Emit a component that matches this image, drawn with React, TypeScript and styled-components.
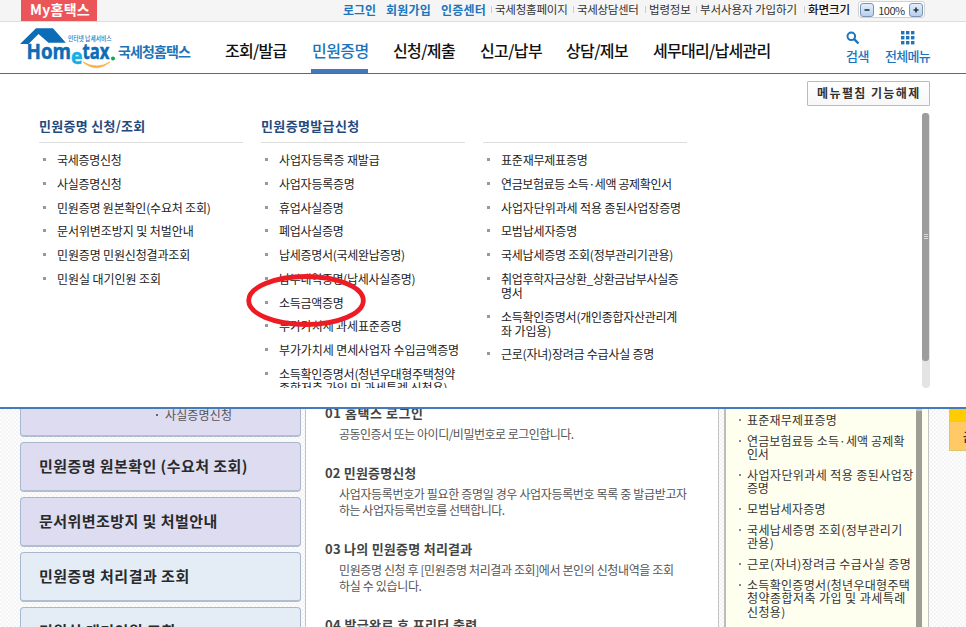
import React from "react";
import styled, { createGlobalStyle } from "styled-components";

const GlobalStyle = createGlobalStyle`
  * { box-sizing: border-box; }
  html, body { margin: 0; padding: 0; }
  body {
    width: 966px;
    height: 627px;
    overflow: hidden;
    background: #fff;
    font-family: "Noto Sans CJK KR", "Noto Sans", sans-serif;
    color: #333;
  }
  ul { list-style: none; margin: 0; padding: 0; }
`;

/* Average advance of a run, in em, used to derive the tracking of fixed-width labels. */
const advance = (text: string) =>
  Array.from(text).reduce((sum, ch) => {
    if (ch === " ") return sum + 0.224;
    if ("()[]".includes(ch)) return sum + 0.338;
    if (ch === "/") return sum + 0.392;
    if (ch === "·") return sum + 0.56;
    if (ch === ".") return sum + 0.278;
    if (ch === "%") return sum + 0.92;
    if (ch === "M") return sum + 0.84;
    if (/[0-9_y]/.test(ch)) return sum + 0.556;
    return sum + 0.92;
  }, 0);

const Run = styled.span<{ $size: number; $track: number; $weight?: number; $color?: string }>`
  display: block;
  white-space: nowrap;
  font-size: ${(p) => p.$size}px;
  letter-spacing: ${(p) => p.$track}px;
  font-weight: ${(p) => p.$weight ?? 400};
  color: ${(p) => p.$color ?? "inherit"};
`;

type LabelProps = { text: string; width: number; size?: number; weight?: number; color?: string };

const Label = ({ text, width, size = 12, weight, color }: LabelProps) => (
  <Run
    $size={size}
    $weight={weight}
    $color={color}
    $track={Math.round(((width + 0.6 - advance(text) * size) / text.length) * 100) / 100}
  >
    {text}
  </Run>
);

const Page = styled.div`
  position: relative;
  width: 966px;
  height: 627px;
  overflow: hidden;
  display: flex;
  flex-direction: column;
`;

/* ---------- utility bar ---------- */

const UtilityBar = styled.div`
  flex: none;
  height: 22px;
  display: flex;
  background: #f5f5f5;
  border-bottom: 1px solid #ddd;
  padding-left: 21px;
`;

const MyTab = styled.div`
  width: 76px;
  height: 21px;
  background: #ec5558;
  padding-left: 9px;
  line-height: 19px;
`;

const UtilityLinks = styled.div`
  display: flex;
  margin-left: 246px;
  line-height: 19px;
`;

const UtilityItem = styled.div<{ $width: number }>`
  width: ${(p) => p.$width}px;
`;

const DividedItem = styled(UtilityItem)`
  display: flex;
  align-items: center;
  gap: 3px;
  height: 19px;
  &::before {
    content: "";
    width: 1px;
    height: 7px;
    background: #ccc;
  }
`;

const ZoomBox = styled.div`
  display: flex;
  align-items: center;
  justify-content: space-between;
  width: 67px;
  height: 17px;
  margin-top: 1px;
  padding: 0 1px;
  background: #fff;
  border: 1px solid #d2d2d2;
  border-radius: 3px;
`;

const ZoomButton = styled.span`
  width: 14px;
  height: 14px;
  border: 1px solid #7d93b5;
  border-radius: 3px;
  background: linear-gradient(#e3effc, #b4d0ef);
  display: flex;
  align-items: center;
  justify-content: center;
`;

/* ---------- header ---------- */

const Header = styled.header`
  flex: none;
  height: 52px;
  display: flex;
  border-bottom: 1px solid #3d6fae;
  background: #fff;
`;

const LogoLink = styled.div`
  width: 118px;
  padding-left: 19px;
  height: 51px;
`;

const SiteName = styled.div`
  width: 107px;
  line-height: 59px;
`;

const Nav = styled.nav`
  display: grid;
  grid-template-columns: 86px 82px 87px 86px 87px 193px;
  height: 51px;
  line-height: 57px;
`;

const NavItem = styled.div<{ $active?: boolean }>`
  justify-self: start;
  height: 51px;
  padding: 0 0 0 ${(p) => (p.$active ? 1 : 0)}px;
  width: ${(p) => (p.$active ? "57px" : "auto")};
  border-bottom: ${(p) => (p.$active ? "4px solid #4578bb" : "0")};
  color: ${(p) => (p.$active ? "#1c75bc" : "#111")};
`;

const Tool = styled.div<{ $width: number }>`
  width: ${(p) => p.$width}px;
  padding-top: 9px;
  line-height: 20px;
  color: #1c75bc;
`;

const ToolIcon = styled.svg<{ $indent: number }>`
  display: block;
  margin: 0 0 1px ${(p) => p.$indent}px;
`;

/* ---------- menu panel ---------- */

const Panel = styled.section`
  flex: none;
  height: 335px;
  display: flex;
  flex-direction: column;
  background: #fff;
  border-bottom: 2px solid #427abb;
  padding: 7px 36px 0 39px;
`;

const PanelTop = styled.div`
  display: flex;
  justify-content: flex-end;
  height: 31px;
`;

const FoldButton = styled.div`
  width: 123px;
  height: 25px;
  padding-left: 9px;
  line-height: 22px;
  border: 1px solid #bbb;
  border-radius: 1px;
  background: linear-gradient(#fff, #f7f7f7);
  color: #333;
`;

const PanelBody = styled.div`
  display: flex;
  justify-content: space-between;
  height: 276px;
`;

const Columns = styled.div`
  display: grid;
  grid-template-columns: repeat(3, 204px);
  column-gap: 18px;
  height: 276px;
  overflow: hidden;
`;

const ColumnTitle = styled.div`
  height: 31px;
  line-height: 27px;
  border-bottom: 1px solid #ddd;
  color: #24497b;
`;

const MenuList = styled.ul`
  display: flex;
  flex-direction: column;
  gap: 9.75px;
  padding-top: 10px;
`;

const MenuItem = styled.li`
  display: flex;
  line-height: 14px;
  color: #222;
  &::before {
    content: "";
    flex: none;
    width: 3px;
    height: 3px;
    margin: 5px 11px 0 4px;
    background: #999;
  }
`;

const ScrollTrack = styled.div`
  width: 8px;
  height: 275px;
  margin-top: 1px;
  border-radius: 4px;
  background: #e4e4e4;
`;

const ScrollThumb = styled.div`
  display: flex;
  align-items: center;
  justify-content: center;
  width: 7px;
  height: 248px;
  border-radius: 3px;
  background: #9c9c9c;
`;

/* ---------- page content ---------- */

const Content = styled.main`
  flex: none;
  display: flex;
  height: 218px;
  overflow: hidden;
  background-color: #fbfbfb;
  background-image: repeating-conic-gradient(#f4f4f4 0 25%, #fdfdfd 0 50%);
  background-size: 4px 4px;
`;

const Side = styled.div`
  display: flex;
  flex-direction: column;
  gap: 5px;
  width: 305px;
  margin-top: -22px;
  padding-left: 20px;
`;

const Card = styled.div<{ $tone: "violet" | "blue" }>`
  flex: none;
  width: 281px;
  height: 50px;
  padding-left: 18px;
  line-height: 46px;
  border: 1px solid #a9b8cf;
  border-bottom: 2px solid #b2bdcf;
  border-radius: 4px;
  background: ${(p) => (p.$tone === "violet" ? "#dddcf1" : "#e4edf5")};
  color: #2a2a2a;
`;

const SubLink = styled.div`
  display: flex;
  align-items: center;
  gap: 7px;
  margin: 17px 0 0 117px;
  height: 20px;
  line-height: 20px;
  color: #555;
  &::before {
    content: "";
    width: 2px;
    height: 2px;
    background: #666;
  }
`;

const Guide = styled.div`
  width: 414px;
  background: #fff;
  border-left: 1px solid #c4c4c4;
  border-right: 1px solid #c4c4c4;
  padding-left: 19px;
`;

const Steps = styled.div`
  margin-top: -6px;
`;

const Step = styled.div<{ $height: number }>`
  height: ${(p) => p.$height}px;
  color: #555;
`;

const StepTitle = styled.div`
  line-height: 20px;
  color: #444;
`;

const StepText = styled.div`
  padding: 3px 0 0 14px;
  line-height: 15.5px;
`;

const Related = styled.aside`
  display: flex;
  justify-content: space-between;
  width: 205px;
  margin-left: 5px;
  background: #fffff0;
  border-left: 2px solid #bdbdbd;
  border-right: 1px solid #c4c4c4;
  padding-right: 6px;
`;

const RelatedList = styled.ul`
  display: flex;
  flex-direction: column;
  gap: 7.2px;
  padding: 4px 0 0 13px;
  width: 189px;
`;

const RelatedItem = styled.li`
  display: flex;
  line-height: 13.5px;
  color: #333;
  &::before {
    content: "";
    flex: none;
    width: 2px;
    height: 2px;
    margin: 6px 6px 0 0;
    background: #888;
  }
`;

const RelatedScroll = styled.div`
  width: 6px;
  height: 218px;
  background: #9e9e96;
  border-top: 2px solid #c9c9c0;
`;

const QuickMenu = styled.div`
  width: 17px;
  margin-left: auto;
`;

const QuickHead = styled.div`
  height: 12px;
  background: #ffcb05;
`;

const QuickBody = styled.div`
  height: 30px;
  padding-left: 13px;
  line-height: 29px;
  overflow: hidden;
  border: 1px solid #d9c86a;
  border-right: 0;
  background: #ffc966;
`;

const Highlight = styled.svg`
  position: absolute;
  left: 244px;
  top: 271px;
  pointer-events: none;
`;

type Line = [string, number];

const column1: Line[][] = [
  [["국세증명신청", 64]],
  [["사실증명신청", 64]],
  [["민원증명 원본확인(수요처 조회)", 153]],
  [["문서위변조방지 및 처벌안내", 136]],
  [["민원증명 민원신청결과조회", 132.5]],
  [["민원실 대기인원 조회", 103.5]],
];
const column2: Line[][] = [
  [["사업자등록증 재발급", 100]],
  [["사업자등록증명", 75]],
  [["휴업사실증명", 64]],
  [["폐업사실증명", 64]],
  [["납세증명서(국세완납증명)", 125]],
  [["납부내역증명(납세사실증명)", 135.5]],
  [["소득금액증명", 64]],
  [["부가가치세 과세표준증명", 122]],
  [["부가가치세 면세사업자 수입금액증명", 179.5]],
  [["소득확인증명서(청년우대형주택청약", 175.5], ["종합저축 가입 및 과세특례 신청용)", 168]],
];
const column3: Line[][] = [
  [["표준재무제표증명", 86]],
  [["연금보험료등 소득·세액 공제확인서", 170]],
  [["사업자단위과세 적용 종된사업장증명", 179.5]],
  [["모범납세자증명", 75.5]],
  [["국세납세증명 조회(정부관리기관용)", 171.5]],
  [["취업후학자금상환_상환금납부사실증", 177], ["명서", 21]],
  [["소득확인증명서(개인종합자산관리계", 175.5], ["좌 가입용)", 49.5]],
  [["근로(자녀)장려금 수급사실 증명", 152.5]],
];
const related: Line[][] = [
  [["표준재무제표증명", 89.5]],
  [["연금보험료등 소득·세액 공제확", 157], ["인서", 21]],
  [["사업자단위과세 적용 종된사업장", 166], ["증명", 21]],
  [["모범납세자증명", 78]],
  [["국세납세증명 조회(정부관리기", 155], ["관용)", 26.5]],
  [["근로(자녀)장려금 수급사실 증명", 163.5]],
  [["소득확인증명서(청년우대형주택", 162.5], ["청약종합저축 가입 및 과세특례", 158], ["신청용)", 38]],
];

const Lines = ({ lines }: { lines: Line[] }) => (
  <div>
    {lines.map(([text, width]) => (
      <Label key={text} text={text} width={width} />
    ))}
  </div>
);

const Column = ({ title, items }: { title?: Line; items: Line[][] }) => (
  <div>
    <ColumnTitle>
      {title && <Label text={title[0]} width={title[1]} size={13} weight={700} />}
    </ColumnTitle>
    <MenuList>
      {items.map((lines) => (
        <MenuItem key={lines[0][0]}>
          <Lines lines={lines} />
        </MenuItem>
      ))}
    </MenuList>
  </div>
);

const Logo = () => (
  <svg width="99" height="51" viewBox="19 22 99 51" aria-label="Hometax">
    <path d="M20 44 L36 28.3 H53 L65.8 42.7 H48.5 L38.5 34 L28.5 44 Z" fill="#0c6cb5" />
    <text x="68" y="41" fontSize="6.4" fontWeight="500" fill="#1c75bc" textLength="43.5" lengthAdjust="spacingAndGlyphs">인터넷 납세서비스</text>
    <g fontFamily="Open Sans, Noto Sans, sans-serif" fontWeight="700" fill="#0c6cb5" stroke="#0c6cb5" strokeWidth="0.5">
      <text x="26.5" y="59" fontSize="21.5" textLength="44.5" lengthAdjust="spacingAndGlyphs">Hom</text>
      <text x="71" y="63.6" fontSize="21" fill="#12b0e6" stroke="#12b0e6" textLength="11.5" lengthAdjust="spacingAndGlyphs">e</text>
      <text x="82.500" y="59" fontSize="21" textLength="27" lengthAdjust="spacingAndGlyphs">tax</text>
    </g>
    <circle cx="113" cy="58.5" r="2" fill="#12a650" />
    <path d="M83 62 Q96 73.500 110 62 Q97 70 83 62 Z" fill="#f9b04a" stroke="#f9b04a" strokeWidth="0.8" />
  </svg>
);

const navItems: { text: string; width: number; active?: boolean }[] = [
  { text: "조회/발급", width: 61 },
  { text: "민원증명", width: 56, active: true },
  { text: "신청/제출", width: 61.5 },
  { text: "신고/납부", width: 61.5 },
  { text: "상담/제보", width: 61.5 },
  { text: "세무대리/납세관리", width: 117 },
];

export default function App() {
  return (
    <>
      <GlobalStyle />
      <Page>
        <UtilityBar>
          <MyTab><Label text="My홈택스" width={59} size={14} weight={700} color="#fff" /></MyTab>
          <UtilityLinks>
            <UtilityItem $width={43}><Label text="로그인" width={32.5} weight={700} color="#1c75bc" /></UtilityItem>
            <UtilityItem $width={55}><Label text="회원가입" width={44.5} weight={700} color="#1c75bc" /></UtilityItem>
            <UtilityItem $width={50}><Label text="인증센터" width={44.5} weight={700} color="#1c75bc" /></UtilityItem>
            <DividedItem $width={82}><Label text="국세청홈페이지" width={72} size={11.5} /></DividedItem>
            <DividedItem $width={72}><Label text="국세상담센터" width={61} size={11.5} /></DividedItem>
            <DividedItem $width={51}><Label text="법령정보" width={41} size={11.5} /></DividedItem>
            <DividedItem $width={108}><Label text="부서사용자 가입하기" width={96.5} size={11.5} /></DividedItem>
            <DividedItem $width={54}><Label text="화면크기" width={41.5} size={11.5} weight={500} color="#111" /></DividedItem>
          </UtilityLinks>
          <ZoomBox>
            <ZoomButton><svg width="6" height="6"><path d="M0.500 3H5.500" stroke="#333" strokeWidth="1.600" /></svg></ZoomButton>
            <Label text="100%" width={26} size={11} />
            <ZoomButton><svg width="6" height="6"><path d="M0.500 3H5.500M3 0.500V5.500" stroke="#333" strokeWidth="1.600" /></svg></ZoomButton>
          </ZoomBox>
        </UtilityBar>

        <Header>
          <LogoLink><Logo /></LogoLink>
          <SiteName><Label text="국세청홈택스" width={71.5} size={14} weight={700} color="#1f73b7" /></SiteName>
          <Nav>
            {navItems.map((item) => (
              <NavItem key={item.text} $active={item.active}>
                <Label text={item.text} width={item.width} size={16} weight={500} />
              </NavItem>
            ))}
          </Nav>
          <Tool $width={39}>
            <ToolIcon $indent={0} width="14" height="14" viewBox="0 0 14 14">
              <circle cx="5.300" cy="5.300" r="3.800" fill="none" stroke="#1c75bc" strokeWidth="2" />
              <path d="M8.200 8.200 L12.500 12.500" stroke="#1c75bc" strokeWidth="2.400" />
            </ToolIcon>
            <Label text="검색" width={22.5} size={13} weight={500} />
          </Tool>
          <Tool $width={50}>
            <ToolIcon $indent={16} width="14" height="14" viewBox="0 0 14 14">
              {[0, 5, 10].map((y) => [0, 5, 10].map((x) => (
                <rect key={`${x}-${y}`} x={x} y={y} width="3.400" height="3.400" fill="#1c75bc" />
              )))}
            </ToolIcon>
            <Label text="전체메뉴" width={44.5} size={13} weight={500} />
          </Tool>
        </Header>

        <Panel>
          <PanelTop>
            <FoldButton><Label text="메뉴펼침 기능해제" width={103} weight={700} /></FoldButton>
          </PanelTop>
          <PanelBody>
            <Columns>
              <Column title={["민원증명 신청/조회", 106]} items={column1} />
              <Column title={["민원증명발급신청", 98]} items={column2} />
              <Column items={column3} />
            </Columns>
            <ScrollTrack>
              <ScrollThumb>
                <svg width="4" height="6"><path d="M0 0.500H4M0 2.500H4M0 4.500H4" stroke="#d8d8d8" /></svg>
              </ScrollThumb>
            </ScrollTrack>
          </PanelBody>
        </Panel>

        <Content>
          <Side>
            <Card $tone="violet"><SubLink><Label text="사실증명신청" width={66.5} /></SubLink></Card>
            <Card $tone="violet"><Label text="민원증명 원본확인 (수요처 조회)" width={207} size={15} weight={700} /></Card>
            <Card $tone="violet"><Label text="문서위변조방지 및 처벌안내" width={178} size={15} weight={700} /></Card>
            <Card $tone="blue"><Label text="민원증명 처리결과 조회" width={150} size={15} weight={700} /></Card>
            <Card $tone="blue"><Label text="민원실 대기인원 조회" width={136} size={15} weight={700} /></Card>
          </Side>
          <Guide>
            <Steps>
              <Step $height={60}>
                <StepTitle><Label text="01 홈택스 로그인" width={97} size={13} weight={700} /></StepTitle>
                <StepText><Label text="공동인증서 또는 아이디/비밀번호로 로그인합니다." width={234} /></StepText>
              </Step>
              <Step $height={76}>
                <StepTitle><Label text="02 민원증명신청" width={90} size={13} weight={700} /></StepTitle>
                <StepText>
                  <Label text="사업자등록번호가 필요한 증명일 경우 사업자등록번호 목록 중 발급받고자" width={347} />
                  <Label text="하는 사업자등록번호를 선택합니다." width={165} />
                </StepText>
              </Step>
              <Step $height={76}>
                <StepTitle><Label text="03 나의 민원증명 처리결과" width={146} size={13} weight={700} /></StepTitle>
                <StepText>
                  <Label text="민원증명 신청 후 [민원증명 처리결과 조회]에서 본인의 신청내역을 조회" width={334} />
                  <Label text="하실 수 있습니다." width={82} />
                </StepText>
              </Step>
              <Step $height={20}>
                <StepTitle><Label text="04 발급완료 후 프리터 출력" width={151} size={13} weight={700} /></StepTitle>
              </Step>
            </Steps>
          </Guide>
          <Related>
            <RelatedList>
              {related.map((lines) => (
                <RelatedItem key={lines[0][0]}><Lines lines={lines} /></RelatedItem>
              ))}
            </RelatedList>
            <RelatedScroll />
          </Related>
          <QuickMenu>
            <QuickHead />
            <QuickBody><Label text="금" width={12} weight={700} /></QuickBody>
          </QuickMenu>
        </Content>

        <Highlight width="124" height="60">
          <ellipse cx="62" cy="29.500" rx="57.300" ry="24" fill="none" stroke="#ed1c24" strokeWidth="4.800" />
        </Highlight>
      </Page>
    </>
  );
}
